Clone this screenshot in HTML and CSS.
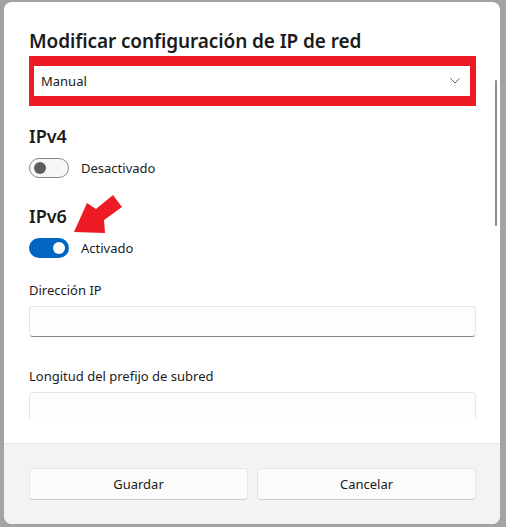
FILE: index.html
```html
<!DOCTYPE html>
<html lang="es">
<head>
<meta charset="utf-8">
<title>Modificar configuración de IP de red</title>
<link rel="stylesheet" href="styles.css">
</head>
<body>
<div class="backdrop">
  <div class="dialog">
    <div class="body">
      <div class="scroll">
        <h1 class="title">Modificar configuración de IP de red</h1>
        <div class="highlight">
          <div class="select">
            <span>Manual</span>
            <svg class="chevron" width="10" height="6" viewBox="0 0 10 6"><path d="M0.5 0.5 L5 5 L9.5 0.5" fill="none" stroke="#5f5f5f" stroke-width="1"/></svg>
          </div>
        </div>
        <h2 class="section first">IPv4</h2>
        <div class="toggle-row">
          <span class="toggle off"><span class="knob"></span></span>
          <span class="toggle-label">Desactivado</span>
        </div>
        <div class="section-wrap">
          <h2 class="section">IPv6</h2>
          <svg class="arrow" width="70" height="50" viewBox="0 0 70 50"><polygon points="14,42 27,13 36,19 53,5 62,17 44,30 45,43" fill="#ed1c24"/></svg>
        </div>
        <div class="toggle-row">
          <span class="toggle on"><span class="knob"></span></span>
          <span class="toggle-label">Activado</span>
        </div>
        <label class="field-label">Dirección IP</label>
        <div class="input"></div>
        <label class="field-label second">Longitud del prefijo de subred</label>
        <div class="input"></div>
      </div>
      <div class="scrollbar"></div>
    </div>
    <div class="footer">
      <button class="btn">Guardar</button>
      <button class="btn">Cancelar</button>
    </div>
  </div>
</div>
</body>
</html>
```
FILE: styles.css
```css
* { box-sizing: border-box; }
html, body { margin: 0; padding: 0; }
body {
  width: 506px;
  height: 527px;
  overflow: hidden;
  background: #a3a3a3;
  font-family: "Noto Sans", "Open Sans", sans-serif;
  color: #1b1b1b;
}
.backdrop {
  padding: 2px 6px 3px 4px;
}
.dialog {
  width: 496px;
  height: 522px;
  background: #ffffff;
  border-radius: 8px;
  overflow: hidden;
  display: flex;
  flex-direction: column;
}
.body {
  position: relative;
  height: 441px;
  padding: 0 24px 23px 25px;
}
.scroll {
  height: 417px;
  overflow: hidden;
}
.title {
  margin: 0;
  padding-top: 24px;
  font-size: 19px;
  line-height: 30px;
  font-weight: 600;
  letter-spacing: -0.1px;
}
.highlight {
  margin: 0 -4px 0 -5px;
  border: 10px solid #ed1c24;
}
.select {
  height: 30px;
  display: flex;
  align-items: center;
  justify-content: space-between;
  padding: 0 10px 0 7px;
  font-size: 13px;
  background: #fff;
}
.chevron { display: block; }
.section {
  margin: 0;
  font-size: 18px;
  line-height: 28px;
  font-weight: 600;
}
.section.first { margin-top: 16px; }
.section-wrap {
  position: relative;
  margin-top: 24px;
}
.arrow {
  position: absolute;
  left: 31px;
  top: -12px;
}
.toggle-row {
  display: flex;
  align-items: center;
  gap: 12px;
  margin-top: 8px;
  height: 20px;
}
.toggle {
  width: 40px;
  height: 20px;
  border-radius: 10px;
  display: flex;
  align-items: center;
  padding: 0 4px;
}
.toggle.off {
  border: 1px solid #8a8a8a;
  background: #f7f7f7;
}
.toggle.on {
  background: #0067c0;
  justify-content: flex-end;
}
.knob {
  width: 12px;
  height: 12px;
  border-radius: 50%;
}
.off .knob { background: #5d5d5d; }
.on .knob { background: #ffffff; }
.toggle-label {
  font-size: 13px;
  line-height: 20px;
}
.field-label {
  display: block;
  margin-top: 22px;
  font-size: 13px;
  line-height: 20px;
}
.field-label.second { margin-top: 29px; }
.input {
  margin-top: 6px;
  height: 31px;
  border: 1px solid #e5e5e5;
  border-bottom-color: #8a8a8a;
  border-radius: 4px;
  background: #fdfdfd;
}
.scrollbar {
  position: absolute;
  right: 3px;
  top: 78px;
  width: 2px;
  height: 146px;
  border-radius: 1px;
  background: #8a8a8a;
}
.footer {
  flex: 1;
  background: #f3f3f3;
  border-top: 1px solid #e5e5e5;
  padding: 24px 24px 0 25px;
  display: flex;
  gap: 9px;
  align-items: flex-start;
}
.btn {
  flex: 1;
  height: 32px;
  border: 1px solid #e5e5e5;
  border-bottom-color: #cfcfcf;
  border-radius: 4px;
  background: #fbfbfb;
  font-family: inherit;
  font-size: 13px;
  color: #1b1b1b;
}
```
